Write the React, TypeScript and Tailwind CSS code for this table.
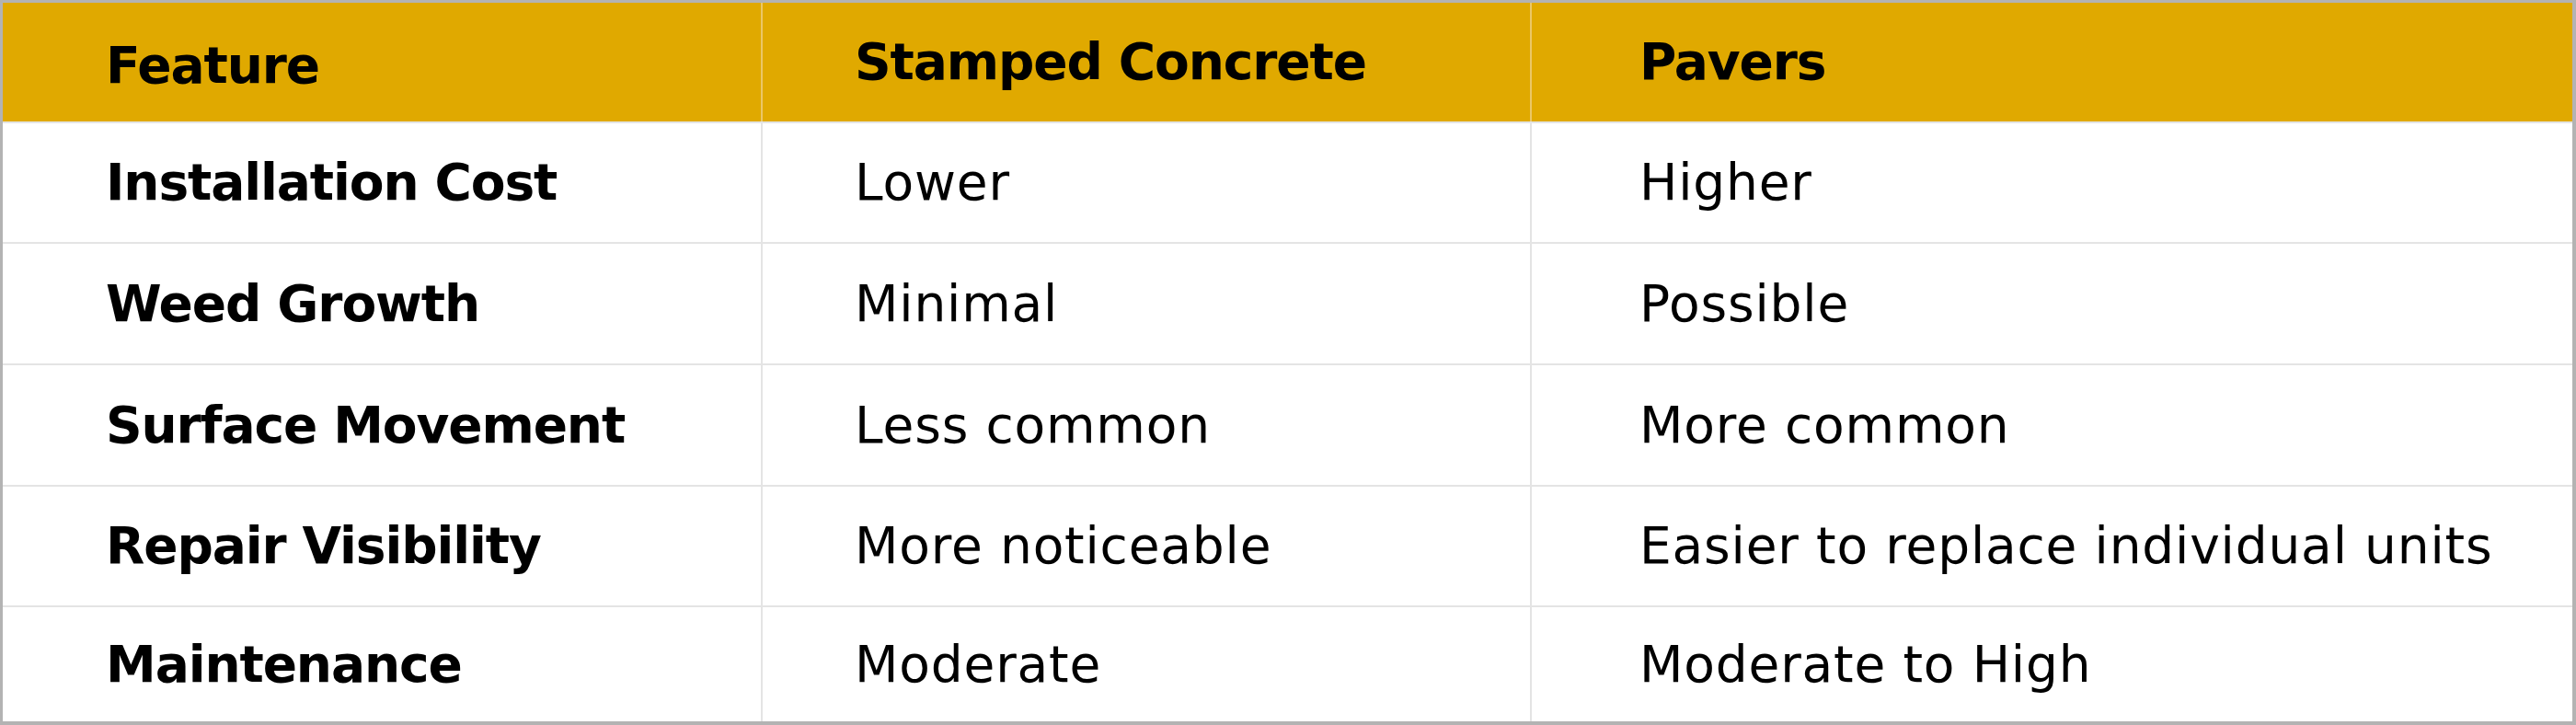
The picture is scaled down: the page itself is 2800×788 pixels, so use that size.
const rows = [
  { feature: "Installation Cost", concrete: "Lower", pavers: "Higher", h: "h-[131px]" },
  { feature: "Weed Growth", concrete: "Minimal", pavers: "Possible", h: "h-[132px]" },
  { feature: "Surface Movement", concrete: "Less common", pavers: "More common", h: "h-[132px]" },
  { feature: "Repair Visibility", concrete: "More noticeable", pavers: "Easier to replace individual units", h: "h-[131px]" },
  { feature: "Maintenance", concrete: "Moderate", pavers: "Moderate to High", h: "h-[126px]" },
];

const App = () => {
  return (
    <div className="h-[788px] w-[2800px] overflow-hidden bg-white font-['DejaVu_Sans',sans-serif] text-black">
      <div className="h-full w-full border-t-[3px] border-r-4 border-b-4 border-l-[3px] border-[#b3b3b3]">
        {/* header */}
        <div className="grid h-[129px] grid-cols-[824px_836px_1fr] bg-[#e0a900] text-[55px] font-bold tracking-[-0.02em]">
          <div className="flex items-center pt-2 pl-[112px]">Feature</div>
          <div className="flex items-center border-l-2 border-[#ebc767] pl-[100px]">
            Stamped Concrete
          </div>
          <div className="flex items-center border-l-2 border-[#ebc767] pl-[117px]">
            Pavers
          </div>
        </div>

        {rows.map((row) => (
          <div
            key={row.feature}
            className={`grid grid-cols-[824px_836px_1fr] border-t-2 border-[#e4e4e4] text-[55px] ${row.h}`}
          >
            <div className="flex items-center pl-[112px] font-bold tracking-[-0.02em]">
              {row.feature}
            </div>
            <div className="flex items-center border-l-2 border-[#e4e4e4] pl-[100px] tracking-[0.015em]">
              {row.concrete}
            </div>
            <div className="flex items-center border-l-2 border-[#e4e4e4] pl-[117px] tracking-[0.015em]">
              {row.pavers}
            </div>
          </div>
        ))}
      </div>
    </div>
  );
};

export default App;
